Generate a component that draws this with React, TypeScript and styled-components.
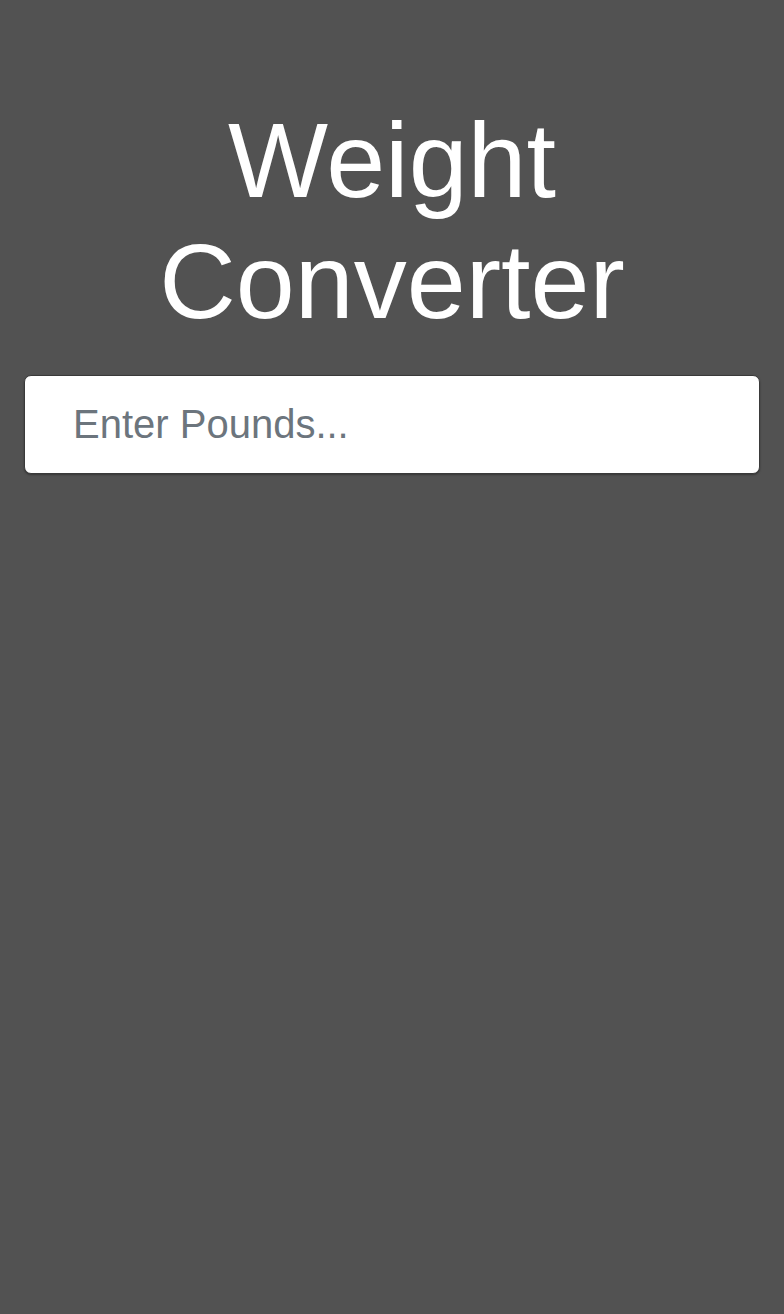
import { createGlobalStyle, styled } from 'styled-components';

const GlobalStyle = createGlobalStyle`
  html, body {
    margin: 0;
    padding: 0;
    background-color: #525252;
  }
  body {
    font-family: "Liberation Sans", Arial, sans-serif;
  }
`;

const Wrapper = styled.div`
  min-height: 1314px;
  box-sizing: border-box;
  padding: 100px 24px 0;
  display: flex;
  flex-direction: column;
  align-items: stretch;
`;

const Title = styled.h1`
  margin: 0 0 33px;
  color: #ffffff;
  font-weight: 400;
  font-size: 106px;
  line-height: 121px;
  text-align: center;
`;

const PoundsInput = styled.input`
  box-sizing: border-box;
  width: 100%;
  height: 99px;
  padding: 0 48px;
  border: 1px solid #3a3a3a;
  border-radius: 7px;
  background: #ffffff;
  box-shadow: 0 1px 2px rgba(0, 0, 0, 0.35);
  font-family: "Liberation Sans", Arial, sans-serif;
  font-size: 40px;
  color: #495057;
  outline: none;

  &::placeholder {
    color: #6c757d;
  }
`;

function App() {
  return (
    <>
      <GlobalStyle />
      <Wrapper>
        <Title>
          Weight
          <br />
          Converter
        </Title>
        <PoundsInput type="number" placeholder="Enter Pounds..." />
      </Wrapper>
    </>
  );
}
export default App;
